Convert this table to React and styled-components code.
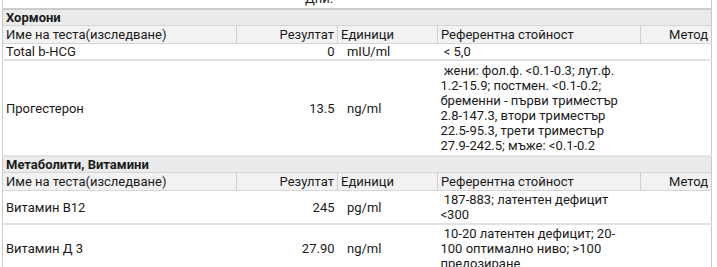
import styled, { createGlobalStyle } from "styled-components";

const Global = createGlobalStyle`
  body {
    margin: 0;
    background: #fff;
    font-family: Roboto, "Liberation Sans", sans-serif;
    font-size: 13px;
    color: #1a1a1a;
  }
`;

const Page = styled.div`
  margin-top: -9px;
  padding-left: 2px;
  width: 709px;
`;

const Table = styled.table`
  width: 100%;
  border-collapse: collapse;
  table-layout: fixed;
  border-left: 1px solid #c8c8c8;
  border-right: 1px solid #c8c8c8;
  line-height: normal;
`;

const Cell = styled.td`
  padding: ${(p) => p.$pad || 0}px 3px;
  vertical-align: middle;
  text-align: ${(p) => (p.$right ? "right" : "left")};
  border-bottom: 2px solid #e2e2e2;
  white-space: ${(p) => (p.$wrap ? "normal" : "nowrap")};
  padding-right: ${(p) => (p.$wrap ? 10 : 3)}px;
`;

const HeadCell = styled.td`
  padding: 0 3px;
  height: 17px;
  background: #f2f2f2;
  border-right: 1px solid #cfcfcf;
  border-bottom: 1px solid #d6d6d6;
  text-align: ${(p) => (p.$right ? "right" : "left")};
  white-space: nowrap;
  &:last-child {
    border-right: none;
  }
`;

const SectionCell = styled.td`
  padding: 0 3px;
  background: #ebebeb;
  border-top: 2px solid #cccccc;
  border-bottom: 1px solid #d6d6d6;
  font-weight: bold;
`;

const TopCell = styled.td`
  height: 17px;
  padding: 0 378px 0 3px;
  text-align: right;
  vertical-align: top;
`;

const Header = () => (
  <tr>
    <HeadCell>Име на теста(изследване)</HeadCell>
    <HeadCell $right>Резултат</HeadCell>
    <HeadCell>Единици</HeadCell>
    <HeadCell>Референтна стойност</HeadCell>
    <HeadCell $right>Метод</HeadCell>
  </tr>
);

const Section = ({ title }) => (
  <tr>
    <SectionCell colSpan={5}>{title}</SectionCell>
  </tr>
);

const Row = ({ name, result, unit, refText, pad }) => (
  <tr>
    <Cell $pad={pad}>{name}</Cell>
    <Cell $pad={pad} $right>{result}</Cell>
    <Cell $pad={pad}>&nbsp;&nbsp;{unit}</Cell>
    <Cell $pad={pad} $wrap>&nbsp;{refText}</Cell>
    <Cell $pad={pad} />
  </tr>
);

export default function App() {
  return (
    <>
      <Global />
      <Page>
        <Table>
          <colgroup>
            <col style={{ width: 234 }} />
            <col style={{ width: 101 }} />
            <col style={{ width: 100 }} />
            <col style={{ width: 203 }} />
            <col style={{ width: 71 }} />
          </colgroup>
          <tbody>
            <tr>
              <TopCell colSpan={5}>Дни:</TopCell>
            </tr>
            <Section title="Хормони" />
            <Header />
            <Row name="Total b-HCG" result="0" unit="mIU/ml" refText="< 5,0" />
            <Row
              name="Прогестерон"
              result="13.5"
              unit="ng/ml"
              pad={2}
              refText="жени: фол.ф. <0.1-0.3; лут.ф. 1.2-15.9; постмен. <0.1-0.2; бременни - първи триместър 2.8-147.3, втори триместър 22.5-95.3, трети триместър 27.9-242.5; мъже: <0.1-0.2"
            />
            <Section title="Метаболити, Витамини" />
            <Header />
            <Row
              name="Витамин B12"
              result="245"
              unit="pg/ml"
              pad={1}
              refText="187-883; латентен дефицит <300"
            />
            <Row
              name="Витамин Д 3"
              result="27.90"
              unit="ng/ml"
              pad={1}
              refText="10-20 латентен дефицит; 20-100 оптимално ниво; >100 предозиране"
            />
          </tbody>
        </Table>
      </Page>
    </>
  );
}
